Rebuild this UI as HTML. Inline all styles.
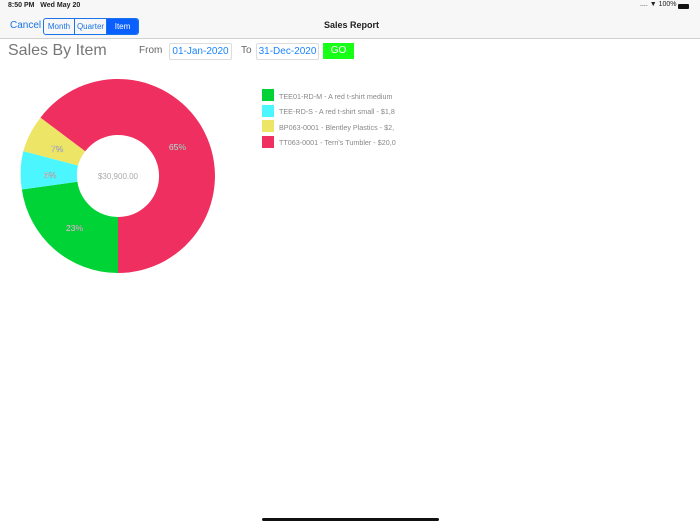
<!DOCTYPE html>
<html><head><meta charset="utf-8"><style>
body{margin:0;width:700px;height:525px;background:#fff;font-family:"Liberation Sans",sans-serif;position:relative;overflow:hidden}
.a{position:absolute;white-space:nowrap}
.hdr{position:absolute;left:0;top:0;width:700px;height:38px;background:#f7f7f7;border-bottom:1px solid #d0d0d0}
.seg{position:absolute;left:43px;top:18px;height:15px;border:1px solid #1a73e8;border-radius:3px;display:flex;font-size:8px;color:#1a73e8;overflow:hidden}
.seg div{line-height:15px;text-align:center}
.box{position:absolute;height:15px;border:1px solid #ddd;border-radius:2px;font-size:10px;color:#1a84ff;line-height:15px;text-align:center}
.sw{position:absolute;left:262px;width:12px;height:12px}
.lg{position:absolute;left:279px;font-size:7.2px;color:#888}
</style></head><body>
<div class="hdr"></div>
<div class="a" style="left:8px;top:2px;font-size:7px;font-weight:bold;color:#222">8:50 PM&nbsp;&nbsp; Wed May 20</div>
<div class="a" style="left:640px;top:1px;font-size:7px;color:#222">.... <span style="font-size:7px">&#9660;</span> 100%</div>
<div class="a" style="left:678px;top:4px;width:11px;height:5px;background:#111;border-radius:1px"></div>
<div class="a" style="left:10px;top:20px;font-size:10px;color:#1a73e8">Cancel</div>
<div class="seg"><div style="width:30px;border-right:1px solid #1a73e8">Month</div><div style="width:31px;border-right:1px solid #1a73e8">Quarter</div><div style="width:31px;background:#0a60ff;color:#fff">Item</div></div>
<div class="a" style="left:324px;top:20px;font-size:9px;font-weight:bold;color:#222">Sales Report</div>
<div class="a" style="left:8px;top:42px;font-size:16px;color:#777">Sales By Item</div>
<div class="a" style="left:139px;top:45px;font-size:10px;color:#666">From</div>
<div class="box" style="left:169px;top:43px;width:61px">01-Jan-2020</div>
<div class="a" style="left:241px;top:45px;font-size:10px;color:#666">To</div>
<div class="box" style="left:256px;top:43px;width:61px">31-Dec-2020</div>
<div class="a" style="left:323px;top:43px;width:31px;height:16px;background:#18ff18;color:#fff;font-size:10px;line-height:16px;text-align:center">GO</div>
<svg class="a" style="left:0;top:0" width="240" height="290">
<path d="M118 273A97 97 0 0 1 21.9 189.5L77.4 181.7A41 41 0 0 0 118 217Z" fill="#00d335"/>
<path d="M21.9 189.5A97 97 0 0 1 23.3 151.1L78 165.5A41 41 0 0 0 77.4 181.7Z" fill="#4cf6ff"/>
<path d="M23.3 151.1A97 97 0 0 1 40.5 117.6L85.3 151.3A41 41 0 0 0 78 165.5Z" fill="#ede566"/>
<path d="M40.5 117.6A97 97 0 1 1 118 273L118 217A41 41 0 1 0 85.3 151.3Z" fill="#ef2f5f"/>
<g font-size="8.5" fill="#fff" stroke="#888" stroke-width="0.3" font-family="Liberation Sans">
<text x="169" y="150">65%</text><text x="51" y="152">7%</text><text x="44" y="178">6%</text><text x="66" y="231">23%</text></g>
<text x="118" y="179" font-size="8" fill="#aaa" text-anchor="middle" font-family="Liberation Sans">$30,900.00</text>
</svg>
<div class="sw" style="top:89px;background:#00d335"></div><div class="lg" style="top:92px">TEE01-RD-M - A red t-shirt medium</div>
<div class="sw" style="top:105px;background:#4cf6ff"></div><div class="lg" style="top:107px">TEE-RD-S - A red t-shirt small - $1,8</div>
<div class="sw" style="top:120px;background:#ede566"></div><div class="lg" style="top:123px">BP063-0001 - Blentley Plastics - $2,</div>
<div class="sw" style="top:136px;background:#ef2f5f"></div><div class="lg" style="top:138px">TT063-0001 - Terri's Tumbler - $20,0</div>
<div class="a" style="left:262px;top:518px;width:177px;height:3px;background:#111;border-radius:2px"></div>
</body></html>
